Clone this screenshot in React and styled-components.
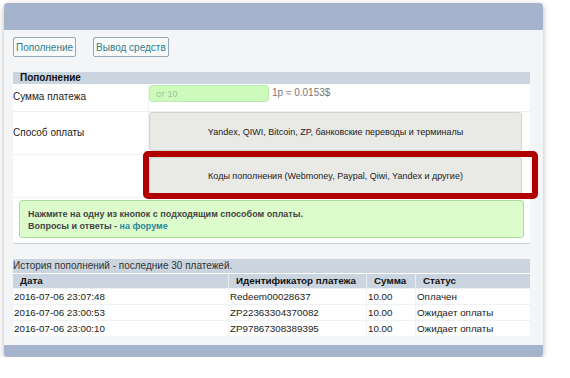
import React from "react";
import styled, { createGlobalStyle } from "styled-components";

const GlobalStyle = createGlobalStyle`
  body {
    margin: 0;
    background: #fff;
    font-family: "Liberation Sans", Arial, sans-serif;
    color: #222;
  }
`;

const Panel = styled.div`
  margin: 3px 0 0 4px;
  width: 539px;
  border-radius: 4px;
  overflow: hidden;
  box-shadow: 0 2px 6px rgba(0, 0, 0, 0.28);
  background: #a5b4cc;
`;

const Header = styled.div`
  height: 27px;
`;

const Footer = styled.div`
  height: 12px;
`;

const Body = styled.div`
  background: #f4f5f7;
  padding: 7px 13px 9px 9px;
`;

const Nav = styled.div`
  display: flex;
  gap: 17px;
  margin-bottom: 15px;
`;

const NavButton = styled.button`
  height: 20px;
  padding: 0 2px;
  border: 1px solid #93a7b6;
  border-radius: 2px;
  background: #f8fafa;
  color: #2f7d8c;
  font-family: "Liberation Sans", Arial, sans-serif;
  font-size: 10px;
`;

const Section = styled.div`
  background: #fff;
  border-bottom: 1px solid #c8d2dc;
`;

const Bar = styled.div`
  background: #cbd5df;
  height: ${(p) => p.$h || 12}px;
  line-height: ${(p) => p.$h || 12}px;
  padding-left: ${(p) => (p.$bold ? 7 : 0)}px;
  font-size: 10px;
  font-weight: ${(p) => (p.$bold ? "bold" : "normal")};
  color: ${(p) => (p.$bold ? "#111" : "#333")};
`;

const Row = styled.div`
  display: grid;
  grid-template-columns: 136px 1fr;
  border-bottom: 1px solid #eef0f2;
  position: relative;
`;

const Label = styled.div`
  font-size: 10px;
  color: #222;
  border-right: 1px solid #eef0f2;
  padding-top: ${(p) => p.$top || 0}px;
  height: ${(p) => p.$h}px;
  box-sizing: border-box;
`;

const Value = styled.div`
  display: flex;
  align-items: flex-start;
  padding: ${(p) => p.$pad || "1px 8px 0 0"};
`;

const AmountInput = styled.div`
  width: 120px;
  height: 17px;
  line-height: 17px;
  background: #ccfbbc;
  border: 1px solid #c0ebb0;
  border-radius: 3px;
  padding-left: 6px;
  box-sizing: border-box;
  font-size: 9px;
  color: #9cc090;
`;

const Rate = styled.span`
  margin-left: 3px;
  margin-top: 2px;
  font-size: 10px;
  color: #777;
`;

const PayButton = styled.div`
  flex: 1;
  height: ${(p) => p.$h || 39}px;
  display: flex;
  align-items: center;
  justify-content: center;
  background: #e9e9e6;
  border: 1px solid #d2d2cf;
  border-radius: 3px;
  box-sizing: border-box;
  font-size: 9px;
  color: #222;
`;

const Highlight = styled.div`
  position: absolute;
  left: 130px;
  top: -4px;
  width: 395px;
  height: 48px;
  border: 6px solid #b10000;
  border-radius: 5px;
  box-sizing: border-box;
  pointer-events: none;
`;

const Notice = styled.div`
  margin: 2px 6px 5px 6px;
  height: 38px;
  box-sizing: border-box;
  padding: 7px 8px 0;
  background: #dcfccc;
  border: 1px solid #aadc9a;
  border-radius: 3px;
  font-size: 9px;
  font-weight: bold;
  color: #444;
  line-height: 12px;

  a {
    color: #2a8796;
    text-decoration: none;
  }
`;

const History = styled.div`
  margin-top: 15px;
`;

const Table = styled.div`
  display: grid;
  grid-template-columns: 216px 138px 49px 1fr;
  background: #fff;
  font-size: 9.8px;
`;

const HeadCell = styled.div`
  background: #cbd5df;
  height: 14px;
  line-height: 14px;
  margin-top: 1px;
  padding-left: 7px;
  font-weight: bold;
  color: #111;
  border-right: ${(p) => (p.$last ? 0 : 1)}px solid #e6ebf0;
`;

const Cell = styled.div`
  height: 15px;
  line-height: 15px;
  padding-left: 1px;
  color: #222;
  border-top: 1px solid #f0f1f2;
  border-right: ${(p) => (p.$last ? 0 : 1)}px solid #f0f1f2;
`;

const rows = [
  ["2016-07-06 23:07:48", "Redeem00028637", "10.00", "Оплачен"],
  ["2016-07-06 23:00:53", "ZP22363304370082", "10.00", "Ожидает оплаты"],
  ["2016-07-06 23:00:10", "ZP97867308389395", "10.00", "Ожидает оплаты"],
];

export default function App() {
  return (
    <>
      <GlobalStyle />
      <Panel>
        <Header />
        <Body>
          <Nav>
            <NavButton>Пополнение</NavButton>
            <NavButton>Вывод средств</NavButton>
          </Nav>

          <Section>
            <Bar $bold>Пополнение</Bar>
            <Row>
              <Label $h={27} $top={7}>Сумма платежа</Label>
              <Value>
                <AmountInput>от 10</AmountInput>
                <Rate>1р ≈ 0.0153$</Rate>
              </Value>
            </Row>
            <Row>
              <Label $h={42} $top={15}>Способ оплаты</Label>
              <Value $pad="0 8px 0 0">
                <PayButton>Yandex, QIWI, Bitcoin, ZP, банковские переводы и терминалы</PayButton>
              </Value>
            </Row>
            <Row>
              <Label $h={42} />
              <Value $pad="2px 8px 0 0">
                <PayButton $h={38}>Коды пополнения (Webmoney, Paypal, Qiwi, Yandex и другие)</PayButton>
              </Value>
              <Highlight />
            </Row>
            <Notice>
              Нажмите на одну из кнопок с подходящим способом оплаты.
              <br />
              Вопросы и ответы - <a href="#">на форуме</a>
            </Notice>
          </Section>

          <History>
            <Bar $h={14}>История пополнений - последние 30 платежей.</Bar>
            <Table>
              <HeadCell>Дата</HeadCell>
              <HeadCell>Идентификатор платежа</HeadCell>
              <HeadCell>Сумма</HeadCell>
              <HeadCell $last>Статус</HeadCell>
              {rows.map((r) =>
                r.map((c, i) => (
                  <Cell key={r[1] + i} $last={i === 3}>
                    {c}
                  </Cell>
                ))
              )}
            </Table>
          </History>
        </Body>
        <Footer />
      </Panel>
    </>
  );
}
